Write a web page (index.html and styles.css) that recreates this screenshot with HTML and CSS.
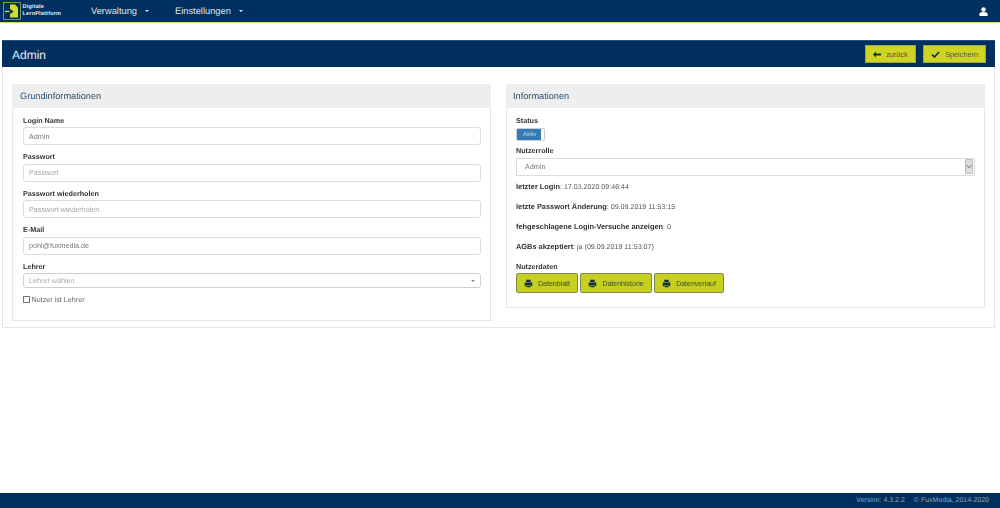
FILE: index.html
```html
<!DOCTYPE html>
<html lang="de">
<head>
<meta charset="utf-8">
<title>Admin</title>
<link rel="stylesheet" href="styles.css">
</head>
<body>
<nav class="topbar">
  <div class="brand">
    <svg class="logo" viewBox="0 0 18 18" width="18" height="18">
      <rect x="0.500" y="0.500" width="17" height="17" fill="#00305f" stroke="#b9c52f" stroke-width="0.700"/>
      <path d="M7 2.500h5l3 3v10H7z" fill="#d4dc26"/>
      <path d="M2 9.500h7M7 7.500l2.500 2-2.500 2" fill="none" stroke="#00305f" stroke-width="1.300"/>
      <path d="M2 9.500h4.500" stroke="#d4dc26" stroke-width="1.300"/>
    </svg>
    <div class="brand-text"><span>Digitale</span><span>LernPlattform</span></div>
  </div>
  <a class="menu menu-first">Verwaltung<i class="caret"></i></a>
  <a class="menu">Einstellungen<i class="caret"></i></a>
  <svg class="user" viewBox="0 0 12 12" width="9" height="9"><circle cx="6" cy="3.200" r="3" fill="#fff"/><path d="M0.500 12V9.500C0.500 7.500 2.500 6.500 6 6.500s5.500 1 5.500 3V12z" fill="#fff"/></svg>
</nav>

<main class="page">
  <header class="titlebar">
    <h1>Admin</h1>
    <div class="actions">
      <button class="btn"><svg viewBox="0 0 12 10" width="8" height="7"><path d="M0 5l4.500-4.500V3.500H12v3H4.500V9.500z" fill="#10304a"/></svg>zurück</button>
      <button class="btn"><svg viewBox="0 0 12 10" width="9" height="7"><path d="M1 5l3.500 3.500L11 1.500" fill="none" stroke="#10304a" stroke-width="2.400"/></svg>Speichern</button>
    </div>
  </header>
  <section class="sheet">
    <div class="panel">
      <h2>Grundinformationen</h2>
      <div class="panel-body left">
        <label>Login Name</label>
        <input class="field" value="Admin">
        <label>Passwort</label>
        <input class="field" placeholder="Passwort">
        <label>Passwort wiederholen</label>
        <input class="field" placeholder="Passwort wiederholen">
        <label>E-Mail</label>
        <input class="field" value="pohl@fuxmedia.de">
        <label>Lehrer</label>
        <div class="combo"><span>Lehrer wählen</span><i class="combo-caret"></i></div>
        <div class="check"><i class="box"></i>Nutzer ist Lehrer</div>
      </div>
    </div>
    <div class="panel">
      <h2>Informationen</h2>
      <div class="panel-body right">
        <label>Status</label>
        <div class="toggle"><span>Aktiv</span><i></i></div>
        <label>Nutzerrolle</label>
        <div class="select"><span>Admin</span><i class="select-arrow"><svg viewBox="0 0 8 6" width="6" height="5"><path d="M1 1.500l3 3 3-3" fill="none" stroke="#555" stroke-width="1.200"/></svg></i></div>
        <p><b>letzter Login</b>: 17.03.2020 09:46:44</p>
        <p><b>letzte Passwort Änderung</b>: 09.09.2019 11:53:15</p>
        <p><b>fehgeschlagene Login-Versuche anzeigen</b>: 0</p>
        <p><b>AGBs akzeptiert</b>: ja (09.09.2019 11:53:07)</p>
        <label class="data-label">Nutzerdaten</label>
        <div class="data-btns">
          <button class="dbtn"><svg viewBox="0 0 12 12" width="9" height="9"><path d="M3 1h6v3H3zM1 4.500h10V9.500H9V8H3v1.500H1zM3.500 8.500h5V11h-5z" fill="#10304a"/></svg>Datenblatt</button>
          <button class="dbtn"><svg viewBox="0 0 12 12" width="9" height="9"><path d="M3 1h6v3H3zM1 4.500h10V9.500H9V8H3v1.500H1zM3.500 8.500h5V11h-5z" fill="#10304a"/></svg>Datenhistorie</button>
          <button class="dbtn"><svg viewBox="0 0 12 12" width="9" height="9"><path d="M3 1h6v3H3zM1 4.500h10V9.500H9V8H3v1.500H1zM3.500 8.500h5V11h-5z" fill="#10304a"/></svg>Datenverlauf</button>
        </div>
      </div>
    </div>
  </section>
</main>

<footer class="footer"><span>Version: 4.3.2.2</span><span>© FuxMedia, 2014-2020</span></footer>
</body>
</html>
```
FILE: styles.css
```css
* { box-sizing: border-box; }
html, body { margin: 0; height: 100%; }
body {
  display: flex;
  flex-direction: column;
  background: #fff;
  font-family: "Liberation Sans", Arial, sans-serif;
  font-size: 8px;
  color: #333;
  text-rendering: geometricPrecision;
}
.topbar, .page, .footer { opacity: 0.999; }
.topbar {
  height: 23px;
  flex: none;
  display: flex;
  align-items: center;
  background: #00305f;
  border-bottom: 1px solid #d5dd6b;
  color: #fff;
  padding: 0 12px 0 3px;
}
.brand { display: flex; align-items: center; gap: 1.500px; width: 88px; }
.logo { flex: none; }
.brand-text { display: flex; flex-direction: column; font-size: 5.500px; font-weight: 700; line-height: 7px; color: #e8eef2; letter-spacing: 0.200px; }
.menu { font-size: 9.300px; color: #dfe6ec; display: flex; align-items: center; }
.menu-first { width: 84px; }
.caret { margin-left: 8px; border: 2px solid transparent; border-top-color: #dfe6ec; border-bottom: 0; width: 0; height: 0; }
.user { margin-left: auto; }

.page { flex: 1; padding: 17px 5px 0 2px; }
.titlebar {
  height: 27px;
  background: #00305f;
  border-top: 1px solid #24507a;
  display: flex;
  align-items: center;
  justify-content: space-between;
  padding: 0 9px 0 10px;
}
h1 { margin: 1px 0 0; font-size: 12px; font-weight: 400; color: #e9eef3; }
.actions { display: flex; gap: 7px; }
.btn {
  height: 18px;
  display: flex;
  align-items: center;
  background: #cfd321;
  border: 1px solid #9aa35a;
  font: 7.300px "Liberation Sans", Arial, sans-serif;
  color: #4a5a30;
  padding: 0 7px;
  gap: 5.500px;
}
.btn svg { flex: none; }
.sheet {
  border: 1px solid #e6e6e6;
  border-top: 0;
  height: 261px;
  padding: 17px 9px 0;
  display: grid;
  grid-template-columns: 479px 479px;
  column-gap: 15px;
  align-items: start;
}
.panel { border: 1px solid #e6e6e6; border-top: 0; }
h2 {
  margin: 0 -1px;
  height: 24px;
  line-height: 24px;
  padding-left: 8px;
  background: #eeeeee;
  font-size: 9.200px;
  font-weight: 400;
  color: #1f4a70;
}
.panel:last-child h2 { padding-left: 7px; }
.panel-body { padding: 8.500px 9px 0 10px; }
.panel-body.left { height: 212px; }
.panel-body.right { height: 199px; padding-left: 9px; }
label { display: block; font-size: 7.200px; font-weight: 700; line-height: 8px; height: 8px; color: #333; }
.field {
  display: block;
  width: 100%;
  height: 18px;
  margin: 2.500px 0 8px;
  border: 1px solid #dcdcdc;
  border-radius: 3px;
  padding: 0 5px;
  font: 7.200px "Liberation Sans", Arial, sans-serif;
  color: #777;
  background: #fff;
  outline: 0;
}
.field::placeholder { color: #a5a5a5; opacity: 1; }
.combo {
  height: 15px;
  margin-top: 2.500px;
  border: 1px solid #cfcfcf;
  border-radius: 3px;
  padding: 0 5px;
  display: flex;
  align-items: center;
  justify-content: space-between;
  color: #aaa;
  font-size: 7.200px;
}
.combo-caret { border: 2px solid transparent; border-top-color: #888; border-bottom: 0; }
.check { display: flex; align-items: center; gap: 1.500px; margin-top: 7px; font-size: 7.200px; color: #666; }
.box { width: 7px; height: 7px; border: 1px solid #777; background: #fff; }
.right label { margin-bottom: 3px; }
.toggle {
  width: 29px;
  height: 13px;
  margin-bottom: 6px;
  background: #337ab7;
  border: 1px solid #ccd;
  border-radius: 2px;
  display: flex;
  justify-content: space-between;
  color: #c5d8ea;
  font-size: 6.200px;
  line-height: 11px;
  padding-left: 6px;
}
.toggle i { width: 3px; background: #fff; }
.select {
  height: 18px;
  margin-bottom: 7px;
  border: 1px solid #dcdcdc;
  display: flex;
  align-items: center;
  justify-content: space-between;
  padding: 0 1px 0 8px;
  font-size: 7.200px;
  color: #777;
}
.select-arrow { width: 8px; height: 15px; background: #ddd; border: 1px solid #bbb; border-radius: 1px; display: flex; align-items: center; justify-content: center; }
.select-arrow svg { flex: none; }
.right p { margin: 0 0 12px; height: 8px; line-height: 8px; font-size: 7.100px; color: #555; }
.right p b { color: #333; font-size: 7.400px; }
.data-btns { display: flex; gap: 2.500px; margin-top: -0.500px; }
.dbtn {
  height: 20px;
  display: flex;
  align-items: center;
  gap: 5px;
  background: #c7cf1f;
  border: 1px solid #7c8a50;
  border-radius: 2px;
  padding: 0 7px;
  font: 7px "Liberation Sans", Arial, sans-serif;
  color: #3c4c30;
}
.footer {
  height: 15px;
  flex: none;
  background: #00305f;
  color: #8ea4bb;
  font-size: 7px;
  display: flex;
  align-items: center;
  justify-content: flex-end;
  gap: 9px;
  padding-right: 11px;
}
```
